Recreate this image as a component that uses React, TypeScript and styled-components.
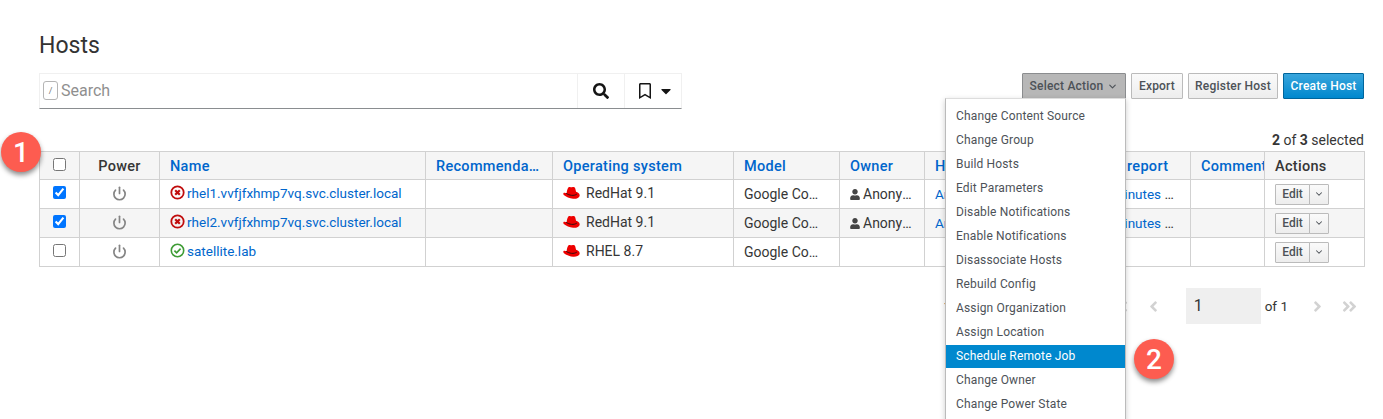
import React from 'react';
import styled, { createGlobalStyle } from 'styled-components';
import { FaSearch, FaRegBookmark, FaCaretDown, FaUser, FaAngleLeft, FaAngleRight, FaAngleDoubleLeft, FaAngleDoubleRight } from 'react-icons/fa';
import { Power, ChevronDown } from 'lucide-react';

const FONT = 'Roboto, "Noto Sans", sans-serif';

const GlobalStyle = createGlobalStyle`
  html, body {
    margin: 0;
    padding: 0;
    height: 419px;
    overflow: hidden;
    background: #fff;
  }
  body {
    font-family: ${FONT};
    font-size: 14px;
    color: #363636;
  }
`;

// --- Page ---
const Page = styled.div`
  position: relative;
  height: 419px;
  overflow: hidden;
  padding: 31px 19px 0 39px;
  box-sizing: border-box;
`;

const Title = styled.h1`
  margin: 0;
  height: 42px;
  font-size: 23px;
  line-height: 30px;
  font-weight: 400;
  color: #333;
`;

// --- Toolbar ---
const Toolbar = styled.div`
  display: flex;
  justify-content: space-between;
  align-items: flex-start;
  height: 58px;
`;

const SearchBar = styled.div`
  display: flex;
  width: 643px;
  height: 36px;
  box-sizing: border-box;
  border: 1px solid #f0f0f0;
  border-bottom: 1px solid #8a8d90;
`;

const SearchInput = styled.div`
  flex: 1;
  display: flex;
  align-items: center;
  padding: 0 0 1px 3px;
  font-size: 16px;
  color: #8f8f8f;
`;

const SlashKey = styled.span`
  display: inline-flex;
  align-items: center;
  justify-content: center;
  width: 13px;
  height: 17px;
  margin-right: 3px;
  border: 1px solid #b5b5b5;
  border-radius: 3px;
  font-size: 9px;
  color: #777;
`;

const SearchButton = styled.div`
  display: flex;
  align-items: center;
  justify-content: center;
  width: 47px;
  box-sizing: border-box;
  border-left: 1px solid #f0f0f0;
  color: #151515;
`;

const BookmarkButton = styled(SearchButton)`
  width: 57px;
  gap: 5px;
  padding-left: 5px;
`;

const ActionGroup = styled.div`
  display: flex;
  gap: 5px;
`;

const Button = styled.div<{ $variant?: 'primary' | 'active'; $width: number }>`
  display: flex;
  align-items: center;
  justify-content: center;
  gap: 4px;
  width: ${props => props.$width}px;
  height: 26px;
  box-sizing: border-box;
  font-size: 12px;
  font-weight: 500;
  letter-spacing: 0.2px;
  border-radius: 1px;
  white-space: nowrap;
  border: 1px solid ${props => props.$variant === 'primary' ? '#00659c' : props.$variant === 'active' ? '#8b8d8f' : '#bbb'};
  color: ${props => props.$variant === 'primary' ? '#fff' : '#4d5258'};
  background: ${props =>
    props.$variant === 'primary'
      ? 'linear-gradient(#39a5dc, #0088ce)'
      : props.$variant === 'active'
      ? '#b7b7b7'
      : 'linear-gradient(#fafafa, #ededed)'};
`;

const SelectedCount = styled.div`
  height: 18px;
  line-height: 18px;
  text-align: right;
  font-size: 14px;
  margin-bottom: 2px;
`;

// --- Table ---
const Table = styled.table`
  width: 1325px;
  table-layout: fixed;
  border-collapse: collapse;
  font-size: 14px;
`;

const Th = styled.th<{ $plain?: boolean; $center?: boolean; $flush?: boolean }>`
  height: 28px;
  padding: 2px ${props => props.$flush ? 0 : 10}px 0 10px;
  box-sizing: border-box;
  background: #f5f5f5;
  border: 1px solid #d1d1d1;
  text-align: ${props => props.$center ? 'center' : 'left'};
  font-size: 14.5px;
  font-weight: 500;
  letter-spacing: 0.3px;
  white-space: nowrap;
  overflow: hidden;
  text-overflow: ${props => props.$flush ? 'clip' : 'ellipsis'};
  color: ${props => props.$plain ? '#363636' : '#0066cc'};
`;

const CheckTh = styled(Th)`
  padding-top: 0;
`;

const Tr = styled.tr<{ $striped?: boolean }>`
  background: ${props => props.$striped ? '#f5f5f5' : '#fff'};
`;

const Td = styled.td<{ $center?: boolean }>`
  height: 29px;
  padding: 0 10px;
  box-sizing: border-box;
  border: 1px solid #d1d1d1;
  white-space: nowrap;
  overflow: hidden;
  text-overflow: ellipsis;
  text-align: ${props => props.$center ? 'center' : 'left'};
`;

const Link = styled.a`
  color: #0066cc;
  font-size: 13.5px;
  text-decoration: none;
`;

const Checkbox = styled.input.attrs({ type: 'checkbox', readOnly: true })`
  display: block;
  width: 13px;
  height: 13px;
  margin: -3px auto 0;
`;

const NameCell = styled.span`
  display: inline-flex;
  align-items: center;
  gap: 2px;
`;

const OsCell = styled.span`
  display: inline-flex;
  align-items: center;
  gap: 6px;
`;

const HatSvg = styled.svg`
  margin-top: 1px;
`;

const OwnerIcon = styled(FaUser)`
  width: 10px;
  height: 11px;
  margin-right: 3px;
  color: #444;
  vertical-align: -1px;
`;

const PowerIcon = styled(Power)`
  display: block;
  margin: -2px auto 0;
  color: #858585;
`;

const EditGroup = styled.div`
  display: inline-flex;
  vertical-align: middle;
  height: 21px;
`;

const EditButton = styled.div`
  display: flex;
  align-items: center;
  justify-content: center;
  width: 35px;
  box-sizing: border-box;
  border: 1px solid #bbb;
  border-radius: 1px 0 0 1px;
  background: linear-gradient(#fafafa, #ededed);
  font-size: 12px;
  font-weight: 500;
  color: #4d5258;
`;

const EditCaret = styled(EditButton)`
  width: 20px;
  margin-left: -1px;
  border-radius: 0 1px 1px 0;
  color: #4d5258;
`;

// --- Pagination ---
const Pagination = styled.div`
  display: flex;
  align-items: center;
  justify-content: flex-end;
  height: 36px;
  margin-top: 21px;
  padding-right: 6px;
  font-size: 13.5px;
  color: #363636;
`;

const PageInput = styled.div`
  width: 75px;
  height: 36px;
  box-sizing: border-box;
  padding: 8px 8px 0;
  background: #efefef;
  font-size: 16px;
  margin: 0 4px 0 24px;
`;

const PageNav = styled.span<{ $gap: number }>`
  display: inline-flex;
  margin-left: ${props => props.$gap}px;
  color: #d2d2d2;
  font-size: 17px;
`;

const RowCount = styled.span`
  margin-right: 116px;
`;

// --- Action menu ---
const Menu = styled.div`
  position: absolute;
  left: 945px;
  top: 98px;
  width: 181px;
  box-sizing: border-box;
  padding: 6px 0 10px;
  background: #fff;
  border: 1px solid #bbb;
  border-top-color: #ddd;
  box-shadow: 0 2px 6px rgba(0, 0, 0, 0.2);
`;

const MenuItem = styled.div<{ $active?: boolean }>`
  height: ${props => props.$active ? 23 : 24}px;
  margin-bottom: ${props => props.$active ? 1 : 0}px;
  line-height: 23px;
  padding-left: 10px;
  font-size: 12px;
  letter-spacing: 0.15px;
  white-space: nowrap;
  color: ${props => props.$active ? '#fff' : '#4d5258'};
  background: ${props => props.$active ? '#0088ce' : 'transparent'};
`;

// --- Callouts ---
const Callout = styled.div<{ $left: number; $top: number }>`
  position: absolute;
  left: ${props => props.$left}px;
  top: ${props => props.$top}px;
  width: 40px;
  height: 40px;
  display: flex;
  align-items: center;
  justify-content: center;
  border-radius: 50%;
  background: #fd5c50;
  color: #fff;
  font-size: 28px;
  font-weight: 500;
  box-shadow: 0 3px 5px rgba(0, 0, 0, 0.45);
`;

// --- Drawn icons ---
const ErrorIcon = () => (
  <svg width="15" height="15" viewBox="0 0 15 15">
    <circle cx="7.5" cy="7.5" r="6.2" fill="none" stroke="#c00d0d" strokeWidth="1.8" />
    <path d="M5.2 5.2l4.6 4.6M9.8 5.2l-4.6 4.6" stroke="#c00d0d" strokeWidth="2.2" />
  </svg>
);

const OkIcon = () => (
  <svg width="15" height="15" viewBox="0 0 15 15">
    <circle cx="7.5" cy="7.5" r="6.2" fill="none" stroke="#3e9c35" strokeWidth="1.6" />
    <path d="M4.4 7.7l2.2 2.2 4-4.200" fill="none" stroke="#3e9c35" strokeWidth="1.7" />
  </svg>
);

const HatIcon = () => (
  <HatSvg width="17" height="14" viewBox="0 0 16 13">
    <path d="M5 1.300C6 .3 7.400 1 8.400 1c1-.1 2-.7 2.700.4.700 1.300.9 2.800 1.200 4 1.500.6 3.400 1.500 3.400 3.100 0 2.200-2.900 3.700-6.200 3.400C6.200 11.600 2.800 10.100.7 8.300-.1 7.500.2 6.300 1.400 6.300c.7 0 1.400.3 2 .5.200-1.900.6-4 1.600-5.500z" fill="#e00" />
    <path d="M3 6.800c2.800 2 7.300 2.800 10 .7" fill="none" stroke="#111" strokeWidth="0.8" />
  </HatSvg>
);

// --- Data ---
const MENU_ITEMS = [
  'Change Content Source',
  'Change Group',
  'Build Hosts',
  'Edit Parameters',
  'Disable Notifications',
  'Enable Notifications',
  'Disassociate Hosts',
  'Rebuild Config',
  'Assign Organization',
  'Assign Location',
  'Schedule Remote Job',
  'Change Owner',
  'Change Power State',
  'Delete Hosts',
];

const COLUMN_WIDTHS = [40, 80, 266, 127, 181, 106, 85, 159, 107, 74, 100];

interface Host {
  name: string;
  ok: boolean;
  os: string;
  owner: string;
  group: string;
  report: string;
  checked: boolean;
}

const HOSTS: Host[] = [
  { name: 'rhel1.vvfjfxhmp7vq.svc.cluster.local', ok: false, os: 'RedHat 9.1', owner: 'Anonymous Admin', group: 'Ansible', report: '15 minutes ago', checked: true },
  { name: 'rhel2.vvfjfxhmp7vq.svc.cluster.local', ok: false, os: 'RedHat 9.1', owner: 'Anonymous Admin', group: 'Ansible', report: '15 minutes ago', checked: true },
  { name: 'satellite.lab', ok: true, os: 'RHEL 8.7', owner: '', group: '', report: '', checked: false },
];

const App: React.FC = () => (
  <Page>
    <GlobalStyle />
    <Title>Hosts</Title>
    <Toolbar>
      <SearchBar>
        <SearchInput>
          <SlashKey>/</SlashKey>
          Search
        </SearchInput>
        <SearchButton>
          <FaSearch size={16} />
        </SearchButton>
        <BookmarkButton>
          <FaRegBookmark size={16} />
          <FaCaretDown size={16} />
        </BookmarkButton>
      </SearchBar>
      <ActionGroup>
        <Button $variant="active" $width={104}>
          Select Action
          <ChevronDown size={11} strokeWidth={2.5} />
        </Button>
        <Button $width={52}>Export</Button>
        <Button $width={90}>Register Host</Button>
        <Button $variant="primary" $width={81}>Create Host</Button>
      </ActionGroup>
    </Toolbar>
    <SelectedCount>
      <b>2</b> of <b>3</b> selected
    </SelectedCount>
    <Table>
      <colgroup>
        {COLUMN_WIDTHS.map((w, i) => (
          <col key={i} style={{ width: w }} />
        ))}
      </colgroup>
      <thead>
        <tr>
          <CheckTh $plain><Checkbox /></CheckTh>
          <Th $plain $center>Power</Th>
          <Th>Name</Th>
          <Th>Recommendations</Th>
          <Th>Operating system</Th>
          <Th>Model</Th>
          <Th>Owner</Th>
          <Th>Host group</Th>
          <Th>Last report</Th>
          <Th $flush>Comment</Th>
          <Th $plain>Actions</Th>
        </tr>
      </thead>
      <tbody>
        {HOSTS.map((host, i) => (
          <Tr key={host.name} $striped={i === 1}>
            <Td><Checkbox defaultChecked={host.checked} /></Td>
            <Td $center><PowerIcon size={15} strokeWidth={2.7} /></Td>
            <Td>
              <NameCell>
                {host.ok ? <OkIcon /> : <ErrorIcon />}
                <Link>{host.name}</Link>
              </NameCell>
            </Td>
            <Td />
            <Td>
              <OsCell>
                <HatIcon />
                {host.os}
              </OsCell>
            </Td>
            <Td>Google Compute Engine</Td>
            <Td>
              {host.owner && <OwnerIcon />}
              {host.owner}
            </Td>
            <Td><Link>{host.group}</Link></Td>
            <Td><Link>{host.report}</Link></Td>
            <Td />
            <Td>
              <EditGroup>
                <EditButton>Edit</EditButton>
                <EditCaret><ChevronDown size={10} strokeWidth={2.5} /></EditCaret>
              </EditGroup>
            </Td>
          </Tr>
        ))}
      </tbody>
    </Table>
    <Pagination>
      <RowCount>1 - 3 of 3</RowCount>
      <PageNav $gap={0}><FaAngleDoubleLeft /></PageNav>
      <PageNav $gap={16}><FaAngleLeft /></PageNav>
      <PageInput>1</PageInput>
      of 1
      <PageNav $gap={21}><FaAngleRight /></PageNav>
      <PageNav $gap={15}><FaAngleDoubleRight /></PageNav>
    </Pagination>
    <Menu>
      {MENU_ITEMS.map(item => (
        <MenuItem key={item} $active={item === 'Schedule Remote Job'}>{item}</MenuItem>
      ))}
    </Menu>
    <Callout $left={1} $top={132}>1</Callout>
    <Callout $left={1134} $top={339}>2</Callout>
  </Page>
);

export default App;
